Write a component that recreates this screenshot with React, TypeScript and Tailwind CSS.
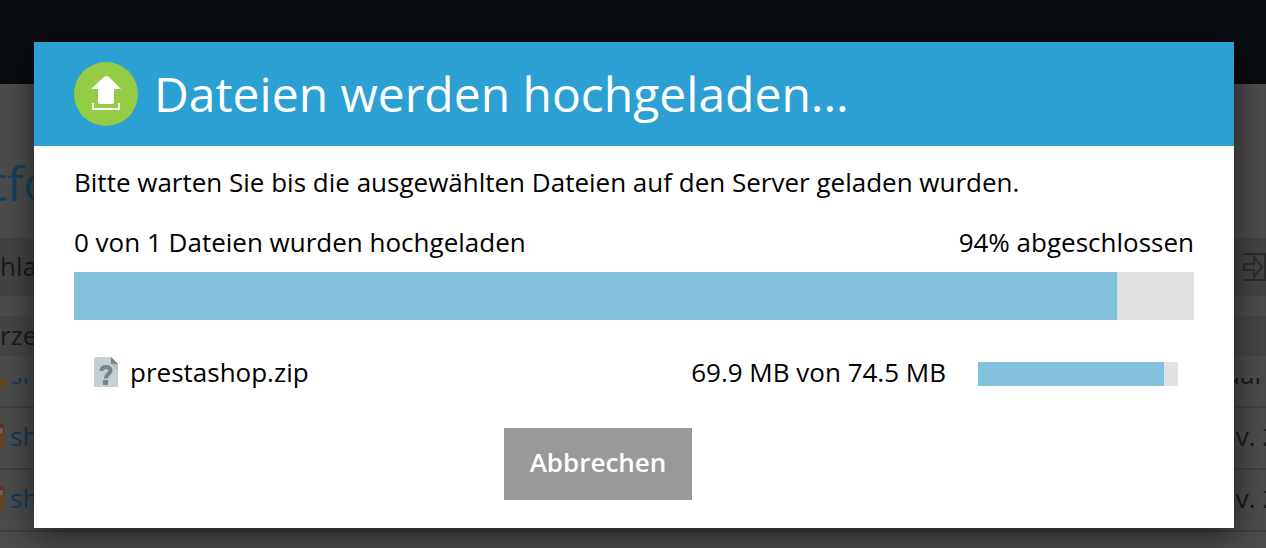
import React from "react";

function UploadIcon() {
  return (
    <svg className="size-16 shrink-0" viewBox="0 0 64 64" aria-hidden="true">
      <circle cx="32" cy="32" r="32" fill="#95cc45" />
      <path
        d="M30 15Q32.500 13 35 15L47 27H40V40Q40 42 38 42H26Q24 42 24 40V27H17Z"
        fill="#fff"
      />
      <path d="M19 41V47H45V41" fill="none" stroke="#fff" strokeWidth="2" />
    </svg>
  );
}

function UnknownFileIcon() {
  return (
    <svg className="h-[30px] w-6 shrink-0" viewBox="0 0 24 30" aria-hidden="true">
      <path d="M2 0H17L24 7V30H0V2Q0 0 2 0Z" fill="#c5ced0" />
      <path d="M17 7L24 14V7Z" fill="#b3bcc4" />
      <path d="M17 0L24 7H17Z" fill="#76858d" />
      <path
        d="M7.500 14C7.500 11.500 9 10 12 10C15 10 16.500 11.300 16.500 13.500C16.500 17 12 16.500 12 21.500"
        fill="none"
        stroke="#76858d"
        strokeWidth="4"
      />
      <rect x="9" y="23" width="5" height="5" fill="#76858d" />
    </svg>
  );
}

function FolderEdge() {
  return (
    <svg className="h-6 w-1 shrink-0" viewBox="0 0 4 24" aria-hidden="true">
      <path d="M0 0H2Q4 0 4 2V22Q4 24 2 24H0Z" fill="#6b4420" />
      <path d="M0 0H2Q4 0 4 2V10H3V4H0Z" fill="#64321c" />
      <path d="M0 4H3V9H0Z" fill="#686260" />
    </svg>
  );
}

function MoveIcon() {
  return (
    <svg
      className="h-7 w-6"
      viewBox="0 0 24 28"
      fill="none"
      stroke="#2b2b2b"
      strokeWidth="2"
      aria-hidden="true"
    >
      <path d="M1 1H24M1 27H24M23 0V28" />
      <path d="M2 11H12V4L20 14L12 24V17H2Z" />
    </svg>
  );
}

function FileRow({ name, date }: { name: string; date: string }) {
  return (
    <li className="flex h-[62px] items-center justify-between border-b-2 border-[#404040] pb-1">
      <span className="flex items-center gap-[6px] text-[#113c5a]">
        <FolderEdge />
        {name}
      </span>
      <span className="w-[46px] whitespace-nowrap">{date}</span>
    </li>
  );
}

function Backdrop() {
  return (
    <div
      aria-hidden="true"
      className="absolute inset-0 flex flex-col overflow-hidden bg-[#4d4d4d] text-[26px] leading-9 text-[#1a1a1a]"
    >
      <div className="h-[84px] shrink-0 bg-[#080d10]" />
      <div className="-ml-[10px] flex h-[154px] shrink-0 items-center pt-[48px] text-[48px] leading-[56px] text-[#17425f]">
        <span className="pb-1">tfo</span>
      </div>
      <div className="flex h-[58px] shrink-0 items-center justify-between bg-[#434343]">
        <span className="pb-[2px]">hla</span>
        <MoveIcon />
      </div>
      <div className="mt-5 flex h-10 shrink-0 items-center bg-[#464646] pb-[2px]">rze</div>
      <div className="flex h-[52px] shrink-0 items-start justify-between border-b-2 border-[#404040] pt-[22px]">
        <span className="flex items-start gap-[6px] text-[#113c5a]">
          <span className="h-[10px] w-1 rounded-br bg-[#6b4420]" />
          <span className="flex h-[6px] items-end overflow-hidden">
            <span className="-mb-2">sh</span>
          </span>
        </span>
        <span className="flex h-[6px] w-[42px] items-end overflow-hidden">
          <span className="-mb-2">uar</span>
        </span>
      </div>
      <ul className="shrink-0">
        <FileRow name="sh" date="ov. 2" />
        <FileRow name="sh" date="ov. 2" />
      </ul>
    </div>
  );
}

function Progress({
  percent,
  label,
  className,
}: {
  percent: number;
  label: string;
  className: string;
}) {
  return (
    <div
      role="progressbar"
      aria-label={label}
      aria-valuemin={0}
      aria-valuemax={100}
      aria-valuenow={Math.round(percent)}
      className={"bg-[#e1e1e1] " + className}
    >
      <div className="h-full bg-[#82c1dc]" style={{ width: percent + "%" }} />
    </div>
  );
}

export default function App() {
  return (
    <div className="relative min-h-screen overflow-hidden font-['Open_Sans',sans-serif]">
      <Backdrop />
      <div className="relative pt-[42px] pr-8 pb-5 pl-[34px]">
        <section
          role="dialog"
          aria-labelledby="upload-title"
          className="bg-white text-[26px] leading-9 text-black shadow-[0_8px_32px_rgba(0,0,0,0.6)]"
        >
          <header className="flex items-center gap-4 bg-[#2c9fd3] px-10 py-5 text-white">
            <UploadIcon />
            <h1 id="upload-title" className="text-[48px] leading-[64px]">
              Dateien werden hochgeladen...
            </h1>
          </header>
          <div className="px-10 pt-[18px] pb-7">
            <p>Bitte warten Sie bis die ausgewählten Dateien auf den Server geladen wurden.</p>
            <div className="mt-6 flex justify-between">
              <span>0 von 1 Dateien wurden hochgeladen</span>
              <span>94% abgeschlossen</span>
            </div>
            <Progress percent={93.1} label="Gesamtfortschritt" className="mt-3 h-12" />
            <div className="mt-[34px] flex items-center pr-4 pl-5">
              <UnknownFileIcon />
              <span className="ml-3 flex-1">prestashop.zip</span>
              <span className="mr-8">69.9 MB von 74.5 MB</span>
              <Progress percent={93} label="prestashop.zip" className="mt-1 h-6 w-[200px]" />
            </div>
            <div className="mt-[38px] flex justify-center pr-[72px]">
              <button
                type="button"
                className="h-[72px] w-[188px] bg-[#999999] pb-1 font-semibold text-white"
              >
                Abbrechen
              </button>
            </div>
          </div>
        </section>
      </div>
    </div>
  );
}
